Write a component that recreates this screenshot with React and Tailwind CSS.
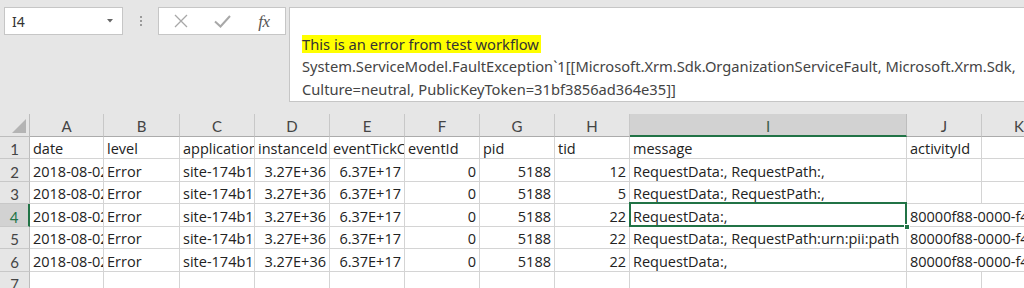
import React from 'react'

const rowHeights = ['h-[22px]', 'h-[23px]', 'h-[22px]', 'h-[23px]', 'h-[22px]', 'h-[23px]', 'h-[22px]']

const columns = ['A', 'B', 'C', 'D', 'E', 'F', 'G', 'H', 'I', 'J', 'K']

const header = ['date', 'level', 'applicationName', 'instanceId', 'eventTickCount', 'eventId', 'pid', 'tid', 'message', 'activityId', '']

const dataRows = [
	{ tid: '12', message: 'RequestData:, RequestPath:,', activity: '' },
	{ tid: '5', message: 'RequestData:, RequestPath:,', activity: '' },
	{ tid: '22', message: 'RequestData:,', activity: '80000f88-0000-f400-b63f-84710c7967bb' },
	{ tid: '22', message: 'RequestData:, RequestPath:urn:pii:path', activity: '80000f88-0000-f400-b63f-84710c7967bb' },
	{ tid: '22', message: 'RequestData:,', activity: '80000f88-0000-f400-b63f-84710c7967bb' },
]

const Cell = ({ children, right, className = '' }) => (
	<div
		className={`flex items-center overflow-hidden whitespace-nowrap border-r border-b border-[#d4d4d4] bg-white px-[3px] pt-[3px] ${
			right ? 'justify-end' : ''
		} ${className}`}
	>
		{children}
	</div>
)

const RowHead = ({ n, active, className = '' }) => (
	<div
		className={`flex items-center justify-center overflow-hidden border-b border-[#c8c8c8] pt-[3px] font-['Lato',sans-serif] text-[15px] ${
			active
				? 'bg-[#d2d2d2] text-[#217346] border-r-2 border-r-[#217346]'
				: 'bg-[#e6e6e6] text-[#444] border-r border-r-[#bdbdbd]'
		} ${className}`}
	>
		{n}
	</div>
)

export default function App() {
	return (
		<div className="w-[1024px] h-[288px] overflow-hidden bg-[#e6e6e6] font-['Open_Sans',sans-serif]">
			{/* Formula bar */}
			<div className="flex h-[114px] pt-[7px] pl-[4px]">
				<div className="flex h-[28px] w-[119px] items-center justify-between border border-[#c6c6c6] bg-white pl-[7px] pr-[9px] font-['Noto_Sans',sans-serif] text-[14px] text-[#333]">
					<span>I4</span>
					<svg width="6" height="4" viewBox="0 0 6 4">
						<polygon points="0,0 6,0 3,3.5" fill="#666" />
					</svg>
				</div>
				<div className="flex h-[28px] w-[35px] flex-col items-center justify-center gap-[2px]">
					<div className="h-[2px] w-[2px] bg-[#9a9a9a]" />
					<div className="h-[2px] w-[2px] bg-[#9a9a9a]" />
					<div className="h-[2px] w-[2px] bg-[#9a9a9a]" />
				</div>
				<div className="flex h-[28px] w-[128px] items-center border border-[#c6c6c6] bg-white">
					<div className="flex w-[42px] justify-center pl-[1px]">
						<svg width="14" height="14" viewBox="0 0 14 14">
							<path d="M1 1L13 13M13 1L1 13" stroke="#a8a8a8" strokeWidth="1.3" fill="none" />
						</svg>
					</div>
					<div className="flex w-[42px] justify-center">
						<svg width="17" height="13" viewBox="0 0 17 13">
							<path d="M1 6.5L6.5 11.5L16 1" stroke="#a8a8a8" strokeWidth="2" fill="none" />
						</svg>
					</div>
					<div className="flex w-[42px] justify-center font-['Liberation_Serif',serif] text-[17px] italic leading-none text-[#555]">
						<span className="tracking-[-0.5px]">fx</span>
					</div>
				</div>
				<div className="ml-[3px] h-[95px] flex-1 overflow-hidden border border-r-0 border-[#c6c6c6] bg-white pl-[12px] pt-[25px] font-['Noto_Sans',sans-serif] text-[14.7px] text-[#444] whitespace-nowrap">
					<div className="flex h-[22px] items-center">
						<span className="bg-[#ffff00] pr-[2px] leading-[18px] text-[#333]">This is an error from test workflow</span>
					</div>
					<div className="flex h-[23px] items-center">
						System.ServiceModel.FaultException`1[[Microsoft.Xrm.Sdk.OrganizationServiceFault, Microsoft.Xrm.Sdk,
					</div>
					<div className="flex h-[22px] items-center">
						Culture=neutral, PublicKeyToken=31bf3856ad364e35]]
					</div>
				</div>
			</div>

			{/* Sheet grid */}
			<div className="grid grid-cols-[30px_74px_76px_75px_75px_75px_75px_75px_75px_277px_75px_75px] text-[14.5px] leading-[18px] text-[#222]">
				{/* column headers */}
				<div className="relative h-[23px] border-r border-b border-[#bdbdbd] bg-[#e6e6e6]">
					<svg className="absolute left-0 top-0" width="30" height="23" viewBox="0 0 30 23">
						<polygon points="26,5 26,19 12,19" fill="#b4b4b4" />
					</svg>
				</div>
				{columns.map((c) =>
					c === 'I' ? (
						<div
							key={c}
							className="flex h-[23px] items-center justify-center border-r border-[#bdbdbd] border-b-2 border-b-[#217346] bg-[#d2d2d2] pt-[2px] font-['Lato',sans-serif] text-[15px] text-[#3b5f49]"
						>
							{c}
						</div>
					) : (
						<div
							key={c}
							className="flex h-[23px] items-center justify-center border-r border-b border-[#c8c8c8] border-b-[#ababab] bg-[#e6e6e6] pt-[1px] font-['Lato',sans-serif] text-[15px] text-[#444]"
						>
							{c}
						</div>
					)
				)}

				{/* row 1 */}
				<RowHead n={1} className={rowHeights[0]} />
				{header.map((h, i) => (
					<Cell key={i} className={rowHeights[0]}>
						{h}
					</Cell>
				))}

				{dataRows.map((r, idx) => {
					const h = rowHeights[idx + 1]
					const rowNo = idx + 2
					return (
						<React.Fragment key={rowNo}>
							<RowHead n={rowNo} active={rowNo === 4} className={h} />
							<Cell className={h}>2018-08-02T17:42:37</Cell>
							<Cell className={h}>Error</Cell>
							<Cell className={h}>site-174b16b6-3a5e</Cell>
							<Cell right className={h}>3.27E+36</Cell>
							<Cell right className={h}>6.37E+17</Cell>
							<Cell right className={h}>0</Cell>
							<Cell right className={h}>5188</Cell>
							<Cell right className={h}>{r.tid}</Cell>
							{rowNo === 4 ? (
								<div className={`relative border-r border-b border-[#d4d4d4] bg-white ${h}`}>
									<div className="flex h-full items-center overflow-hidden whitespace-nowrap px-[3px] pt-[3px]">
										{r.message}
									</div>
									<div className="absolute -left-px -top-[2px] -right-px -bottom-px border-2 border-[#217346]" />
									<div className="absolute -right-[4px] -bottom-[4px] h-[6px] w-[6px] border border-white bg-[#217346]" />
								</div>
							) : (
								<Cell className={h}>{r.message}</Cell>
							)}
							{r.activity ? (
								<Cell className={`col-span-2 ${h}`}>{r.activity}</Cell>
							) : (
								<>
									<Cell className={h} />
									<Cell className={h} />
								</>
							)}
						</React.Fragment>
					)
				})}

				{/* row 7 */}
				<RowHead n={7} className={rowHeights[6]} />
				{columns.map((c) => (
					<Cell key={c} className={rowHeights[6]} />
				))}
			</div>
		</div>
	)
}
